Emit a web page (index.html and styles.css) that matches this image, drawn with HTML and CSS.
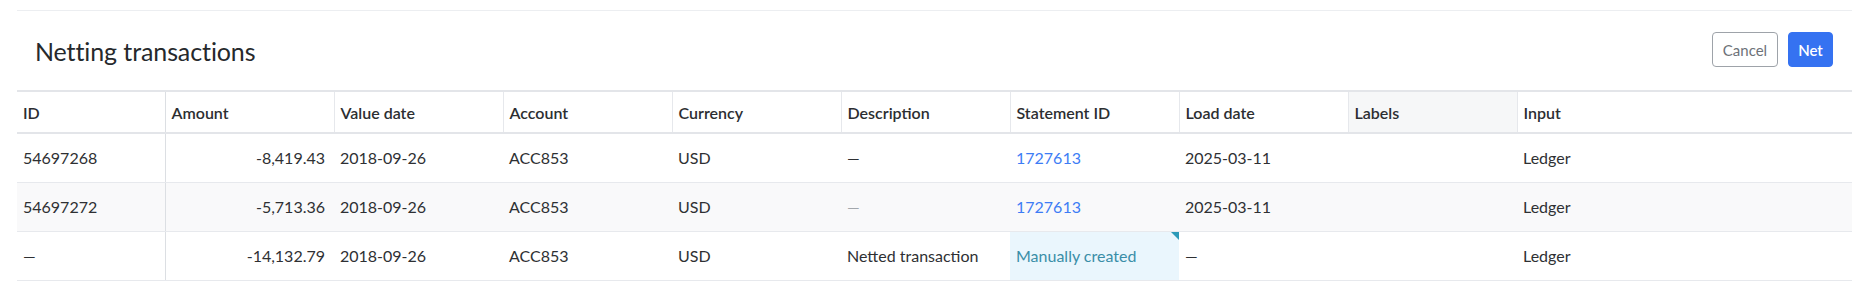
FILE: index.html
```html
<!DOCTYPE html>
<html lang="en">
<head>
<meta charset="utf-8">
<title>Netting transactions</title>
<link rel="stylesheet" href="styles.css">
</head>
<body>
<div class="panel">
  <div class="panel-head">
    <h1 class="title">Netting transactions</h1>
    <div class="actions">
      <button class="btn btn-secondary">Cancel</button>
      <button class="btn btn-primary">Net</button>
    </div>
  </div>
  <table class="grid">
    <colgroup>
      <col class="c-id">
      <col class="c-std"><col class="c-std"><col class="c-std"><col class="c-std">
      <col class="c-std"><col class="c-std"><col class="c-std"><col class="c-std">
      <col class="c-last">
    </colgroup>
    <thead>
      <tr>
        <th class="first">ID</th>
        <th>Amount</th>
        <th>Value date</th>
        <th>Account</th>
        <th>Currency</th>
        <th>Description</th>
        <th>Statement ID</th>
        <th>Load date</th>
        <th class="sorted">Labels</th>
        <th>Input</th>
      </tr>
    </thead>
    <tbody>
      <tr>
        <td class="first">54697268</td>
        <td class="num">-8,419.43</td>
        <td>2018-09-26</td>
        <td>ACC853</td>
        <td>USD</td>
        <td>—</td>
        <td><a class="link" href="#">1727613</a></td>
        <td>2025-03-11</td>
        <td></td>
        <td>Ledger</td>
      </tr>
      <tr class="alt">
        <td class="first">54697272</td>
        <td class="num">-5,713.36</td>
        <td>2018-09-26</td>
        <td>ACC853</td>
        <td>USD</td>
        <td class="muted">—</td>
        <td><a class="link" href="#">1727613</a></td>
        <td>2025-03-11</td>
        <td></td>
        <td>Ledger</td>
      </tr>
      <tr>
        <td class="first">—</td>
        <td class="num">-14,132.79</td>
        <td>2018-09-26</td>
        <td>ACC853</td>
        <td>USD</td>
        <td>Netted transaction</td>
        <td class="manual"><span class="manual-text">Manually created</span><span class="corner"></span></td>
        <td>—</td>
        <td></td>
        <td>Ledger</td>
      </tr>
    </tbody>
  </table>
</div>
</body>
</html>
```
FILE: styles.css
```css
* { box-sizing: border-box; }
html, body { margin: 0; padding: 0; background: #ffffff; }
body {
  font-family: Lato, "Noto Sans", "Liberation Sans", sans-serif;
  color: #2e3033;
  overflow: hidden;
}
.panel {
  margin: 10px 0 0 17px;
  border-top: 1px solid #eceef1;
}
.panel-head {
  display: flex;
  align-items: center;
  justify-content: space-between;
  height: 79px;
  padding: 0 19px 0 18px;
}
.title {
  margin: 0;
  font-size: 25px;
  font-weight: 400;
  color: #26292c;
  letter-spacing: -0.1px;
}
.actions {
  display: flex;
  gap: 10px;
  margin-top: -2px;
}
.btn {
  font-family: inherit;
  font-size: 15px;
  height: 35px;
  border-radius: 4px;
  padding: 0;
  cursor: pointer;
}
.btn-secondary {
  width: 66px;
  background: #fff;
  border: 1px solid #9ea3a9;
  color: #6d7278;
}
.btn-primary {
  width: 45px;
  background: #3572f1;
  border: 1px solid #3572f1;
  color: #fff;
  font-weight: 600;
}
.grid {
  width: 1835px;
  table-layout: fixed;
  border-collapse: collapse;
  border-top: 2px solid #e3e5e9;
  font-size: 16px;
}
.c-id { width: 148px; }
.c-std { width: 169px; }
.c-last { width: 335px; }
.grid th {
  height: 42px;
  text-align: left;
  font-weight: 600;
  color: #2c2e31;
  padding: 0 6px;
  border-right: 1px solid #e6e8ec;
  border-bottom: 2px solid #e3e5e9;
  white-space: nowrap;
}
.grid th.sorted { background: #f6f7f8; }
.grid td {
  height: 49px;
  padding: 0 6px;
  border-bottom: 1px solid #e7e9ed;
  white-space: nowrap;
  color: #2e3033;
}
.grid td.first, .grid th.first { border-right: 1px solid #dcdfe3; }
.grid td.num { text-align: right; padding-right: 9px; }
.grid tr.alt td { background: #f9f9fa; }
.grid td.muted { color: #a3a7ac; }
.link { color: #3d7cf5; text-decoration: none; }
.grid td.manual {
  position: relative;
  background: #eaf6fd;
  color: #3a8ea8;
}
.corner {
  position: absolute;
  top: 0;
  right: 0;
  width: 0;
  height: 0;
  border-top: 8px solid #2c9ab8;
  border-left: 8px solid transparent;
}
```
